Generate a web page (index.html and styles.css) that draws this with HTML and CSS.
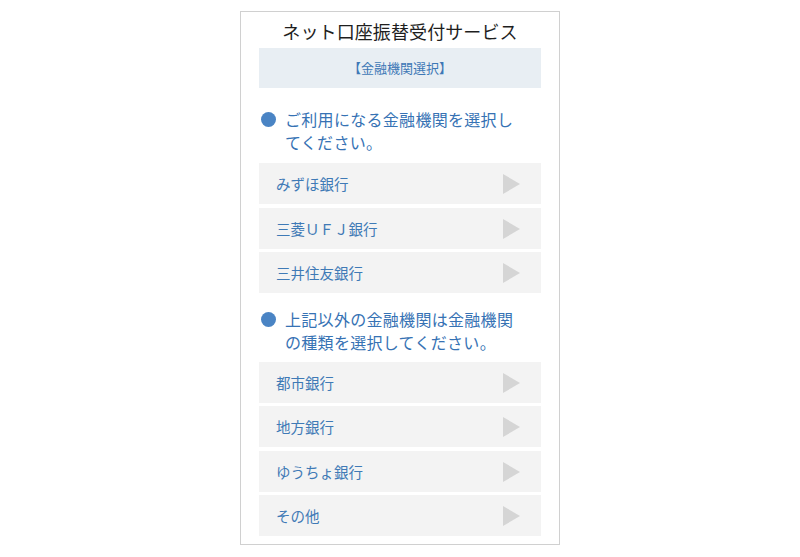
FILE: index.html
```html
<!DOCTYPE html>
<html lang="ja">
<head>
<meta charset="utf-8">
<title>ネット口座振替受付サービス</title>
<link rel="stylesheet" href="styles.css">
</head>
<body>
<div class="frame">
  <h1 class="title">ネット口座振替受付サービス</h1>
  <div class="band">【金融機関選択】</div>
  <p class="heading heading-first">ご利用になる金融機関を選択してください。</p>
  <ul class="list">
    <li class="item"><span>みずほ銀行</span><i class="arrow"></i></li>
    <li class="item"><span>三菱ＵＦＪ銀行</span><i class="arrow"></i></li>
    <li class="item"><span>三井住友銀行</span><i class="arrow"></i></li>
  </ul>
  <p class="heading heading-second">上記以外の金融機関は金融機関の種類を選択してください。</p>
  <ul class="list">
    <li class="item"><span>都市銀行</span><i class="arrow"></i></li>
    <li class="item"><span>地方銀行</span><i class="arrow"></i></li>
    <li class="item"><span>ゆうちょ銀行</span><i class="arrow"></i></li>
    <li class="item"><span>その他</span><i class="arrow"></i></li>
  </ul>
</div>
</body>
</html>
```
FILE: styles.css
```css
html, body {
  margin: 0;
  padding: 0;
  background: #ffffff;
}
body {
  font-family: "Noto Sans CJK JP", "Noto Sans", sans-serif;
}
.frame {
  width: 282px;
  margin: 11px auto 0;
  padding: 0 18px 8px;
  border: 1px solid #d0d0d0;
  background: #fff;
}
.title {
  margin: 0;
  height: 36px;
  line-height: 38px;
  font-size: 18px;
  font-weight: 400;
  color: #1e1e1e;
  text-align: center;
  letter-spacing: 0.1px;
}
.band {
  height: 40px;
  line-height: 40px;
  background: #e8eef3;
  color: #3e78b6;
  font-size: 13px;
  text-align: center;
}
.heading {
  position: relative;
  margin: 0;
  padding: 0 20px 0 26px;
  font-size: 16px;
  line-height: 23px;
  letter-spacing: 0.3px;
  color: #3672b4;
}
.heading::before {
  content: "";
  position: absolute;
  left: 2px;
  top: 4px;
  width: 15px;
  height: 15px;
  border-radius: 50%;
  background: #4a84c4;
}
.heading-first {
  margin-top: 20px;
  margin-bottom: 9px;
}
.heading-second {
  margin-top: 14.5px;
  margin-bottom: 8px;
}
.list {
  list-style: none;
  margin: 0;
  padding: 0;
  display: flex;
  flex-direction: column;
  gap: 3.5px;
}
.item {
  height: 41px;
  display: flex;
  align-items: center;
  justify-content: space-between;
  padding: 0 21px 0 17px;
  background: #f3f3f3;
  color: #3f7ab6;
  font-size: 14.5px;
}
.arrow {
  width: 0;
  height: 0;
  border-style: solid;
  border-width: 10px 0 10px 17px;
  border-color: transparent transparent transparent #d5d5d5;
  margin-top: 1px;
}
```
